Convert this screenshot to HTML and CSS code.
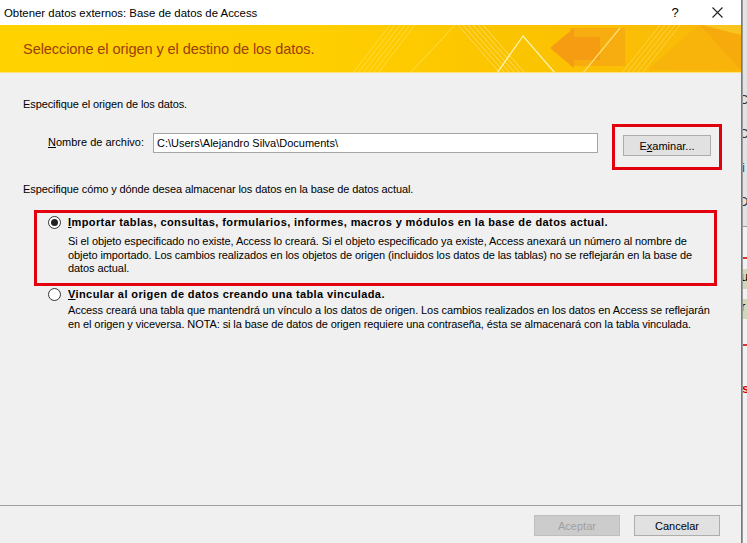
FILE: index.html
```html
<!DOCTYPE html>
<html lang="es">
<head>
<meta charset="UTF-8" />
<title>Obtener datos externos: Base de datos de Access</title>
<link rel="stylesheet" href="styles.css">
</head>
<body>

<div class="screen">
  <div class="dialog">
    <div class="titlebar">
      <span class="title-text">Obtener datos externos: Base de datos de Access</span>
      <span class="title-btn help">?</span>
      <span class="title-btn close">
        <svg width="11" height="11" viewBox="0 0 11 11"><path d="M0.5 0.5 L10.5 10.5 M10.5 0.5 L0.5 10.5" stroke="#222" stroke-width="1.1" fill="none"/></svg>
      </span>
    </div>

    <div class="banner">
      <svg class="banner-art" width="741" height="48" viewBox="0 0 741 48">
        <!-- franjas izquierda -->
        <g stroke="#ffe45a" stroke-width="1" opacity="0.7">
          <line x1="353" y1="48" x2="390" y2="0"/>
          <line x1="358" y1="48" x2="395" y2="0"/>
          <line x1="363" y1="48" x2="400" y2="0"/>
          <line x1="368" y1="48" x2="405" y2="0"/>
          <line x1="373" y1="48" x2="410" y2="0"/>
          <line x1="378" y1="48" x2="415" y2="0"/>
        </g>
        <line x1="410" y1="48" x2="455" y2="0" stroke="#ffe45a" stroke-width="1" opacity="0.8"/>
        <!-- montaña -->
        <polygon points="455,0 520,0 560,48 500,48" fill="#fbc400"/>
        <g stroke="#ffe070" stroke-width="1" opacity="0.8">
          <line x1="458" y1="0" x2="500" y2="48"/>
          <line x1="463" y1="0" x2="505" y2="48"/>
          <line x1="468" y1="0" x2="510" y2="48"/>
          <line x1="473" y1="0" x2="515" y2="48"/>
          <line x1="478" y1="0" x2="520" y2="48"/>
          <line x1="483" y1="0" x2="525" y2="48"/>
        </g>
        <polyline points="497,48 523,11 555,48" stroke="#fff3b0" stroke-width="1.3" fill="none"/>
        <!-- flecha -->
        <rect x="570" y="3" width="55" height="38" fill="#f7ad10"/>
        <polygon points="550,23 574,3 574,12 600,12 600,35 574,35 574,43" fill="#f59c12"/>
        <line x1="583" y1="48" x2="620" y2="3" stroke="#ffe070" stroke-width="1.2"/>
        <!-- franjas derecha -->
        <g stroke="#ffd84a" stroke-width="1" opacity="0.8">
          <line x1="622" y1="48" x2="660" y2="0"/>
          <line x1="627" y1="48" x2="665" y2="0"/>
          <line x1="632" y1="48" x2="670" y2="0"/>
          <line x1="637" y1="48" x2="675" y2="0"/>
          <line x1="642" y1="48" x2="680" y2="0"/>
        </g>
        <polygon points="648,45 698,0 741,0 741,45" fill="#f8b40a"/>
        <polygon points="700,0 741,45 741,0" fill="#f6aa0c"/>
        <polygon points="702,0 741,0 741,10" fill="#fac420"/>
      </svg>
      <span class="banner-text">Seleccione el origen y el destino de los datos.</span>
    </div>

    <div class="content">
      <p class="section-text first">Especifique el origen de los datos.</p>

      <div class="file-row">
        <label class="file-label"><u>N</u>ombre de archivo:</label>
        <div class="file-input">C:\Users\Alejandro Silva\Documents\</div>
        <div class="red-box browse-box">
          <button class="btn browse">E<u>x</u>aminar...</button>
        </div>
      </div>

      <p class="section-text second">Especifique cómo y dónde desea almacenar los datos en la base de datos actual.</p>

      <div class="option red-box">
        <span class="radio checked"></span>
        <div class="option-body">
          <div class="option-title"><u>I</u>mportar tablas, consultas, formularios, informes, macros y módulos en la base de datos actual.</div>
          <div class="option-desc">Si el objeto especificado no existe, Access lo creará. Si el objeto especificado ya existe, Access anexará un número al nombre de<br>objeto importado. Los cambios realizados en los objetos de origen (incluidos los datos de las tablas) no se reflejarán en la base de<br>datos actual.</div>
        </div>
      </div>

      <div class="option plain">
        <span class="radio"></span>
        <div class="option-body">
          <div class="option-title"><u>V</u>incular al origen de datos creando una tabla vinculada.</div>
          <div class="option-desc">Access creará una tabla que mantendrá un vínculo a los datos de origen. Los cambios realizados en los datos en Access se reflejarán<br>en el origen y viceversa. NOTA: si la base de datos de origen requiere una contraseña, ésta se almacenará con la tabla vinculada.</div>
        </div>
      </div>
    </div>

    <div class="footer">
      <button class="btn disabled">Aceptar</button>
      <button class="btn cancel">Cancelar</button>
    </div>
  </div>

  <div class="behind">
    <div class="behind-top">
      <span>C</span><span>C</span><span class="blue">ji</span><span>D</span>
    </div>
    <div class="behind-red r1"></div>
    <div class="behind-cell c1">u</div>
    <div class="behind-cell c2">r</div>
    <div class="behind-red r2"></div>
    <div class="behind-s">s</div>
  </div>
</div>

</body>
</html>
```

FILE: styles.css
```css
* { box-sizing: border-box; margin:0; padding:0; }
body {
  width: 747px; height: 543px; overflow: hidden;
  font-family: 'Liberation Sans', Arial, sans-serif; font-size: 11px; color: #000;
  background: #f0f0f0;
}
.screen { display: flex; height: 543px; }

.dialog {
  width: 742px; height: 543px; flex: none;
  background: #f0f0f0;
  border-right: 1px solid #7a7a7a;
  display: flex; flex-direction: column;
}

.titlebar {
  height: 25px; background: #fff;
  display: flex; align-items: center;
  padding-left: 4px;
  font-size: 11.4px; color: #000;
}
.title-text { flex: 1; }
.title-btn { display: flex; align-items: center; justify-content: center; }
.help { width: 12px; margin-right: 31px; font-size: 13px; }
.close { width: 11px; margin-right: 18px; }

.banner {
  position: relative;
  height: 48px;
  background: linear-gradient(90deg, #ffd200 0%, #ffd000 40%, #fcc400 70%, #f9b80a 100%);
  border-bottom: 1px solid #ffe27a;
  display: flex; align-items: center;
  padding-left: 23px;
  overflow: hidden;
}
.banner-art { position: absolute; left: 0; top: 0; }
.banner-text {
  position: relative;
  font-size: 14.6px; color: #9c3f08; letter-spacing: -0.1px;
}

.content { flex: 1; padding: 0 23px; }
.section-text { line-height: 14px; letter-spacing: -0.1px; }
.section-text.first { margin-top: 24px; }
.section-text.second { margin-top: 12px; }

.file-row { display: flex; align-items: flex-start; margin-top: 13px; padding-left: 25px; }
.file-row > * { flex: none; }
.file-label { width: 105px; margin-top: 11px; line-height: 14px; }
.file-input {
  width: 445px; height: 20px; margin-top: 9px;
  background: #fff; border: 1px solid #a5a5a5;
  padding: 2px 3px; line-height: 14px;
}

.red-box { border: 3px solid #e2000f; }
.browse-box { margin-left: 14px; width: 110px; height: 46px; padding: 8px 8px 0; }

.btn {
  font-family: inherit; font-size: 11px;
  height: 21px; background: #e1e1e1; border: 1px solid #adadad;
  color: #000;
}
.browse { width: 88px; }

.option { display: flex; align-items: flex-start; margin-left: 11px; }
.option.red-box { margin-top: 14px; width: 683px; height: 76px; padding: 2px 0 0 11px; }
.option.plain { padding: 1px 0 0 14px; }
.radio {
  width: 13px; height: 13px; flex: none;
  border: 1px solid #333; border-radius: 50%; background: #fff;
  margin-top: 1px; margin-right: 7px;
  display: flex; align-items: center; justify-content: center;
}
.radio.checked::after {
  content: ''; width: 7px; height: 7px; border-radius: 50%; background: #222;
}
.option-title { font-weight: bold; line-height: 14px; font-size: 11px; letter-spacing: 0.4px; white-space: nowrap; }
.option-desc { margin-top: 6px; line-height: 13.5px; letter-spacing: -0.09px; white-space: nowrap; }
.option.plain .option-desc { margin-top: 3px; }

.footer {
  height: 38px;
  border-top: 1px solid #a0a0a0;
  display: flex; justify-content: flex-end; align-items: flex-start;
  padding: 9px 21px 0 0; gap: 14px;
}
.footer .btn { width: 86px; }
.btn.disabled { background: #cccccc; border-color: #bfbfbf; color: #a0a0a0; }

.behind { flex: 1; background: #f2f2f2; position: relative; overflow: hidden; border-left: 1px solid #9a9a9a; }
.behind-top { height: 227px; background: #e3e3e3; border-bottom: 1px solid #9a9a9a; padding-top: 92px; }
.behind-top span { display: block; height: 34px; font-size: 13px; margin-left: -4px; color: #333; }
.behind-top span.blue { color: #1d4f91; }
.behind-red { height: 2px; background: #d33; }
.r1 { margin-top: 30px; }
.behind-cell { height: 20px; background: #cfd9b8; margin-top: 10px; font-size: 13px; margin-left: -2px; }
.r2 { margin-top: 25px; }
.behind-s { margin-top: 35px; color: #d00; font-weight: bold; font-size: 13px; margin-left: -1px; }
```
